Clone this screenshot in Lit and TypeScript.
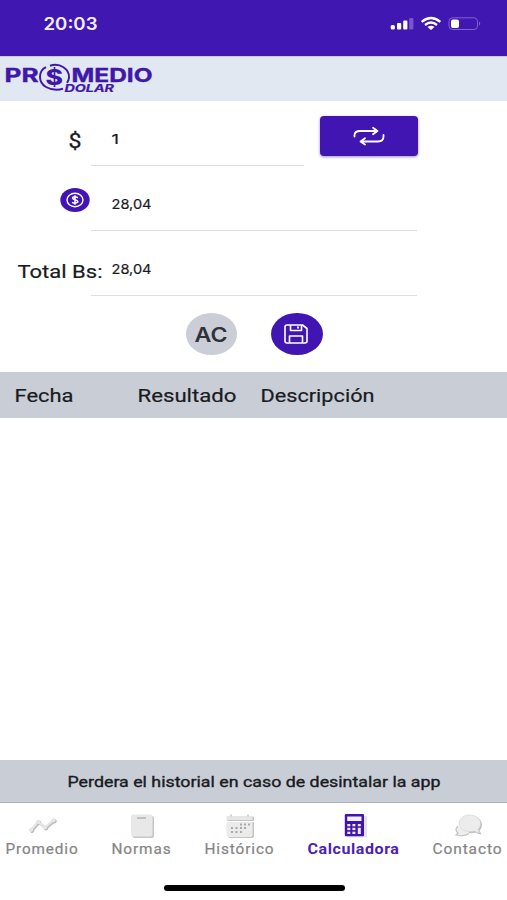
import { LitElement, html, svg, css } from "lit";
import { customElement } from "lit/decorators.js";

// Wide-set text: the glyphs are stretched to fill the given width.
const wide = (text: string, width: number, height: number, cls: string) => html`
  <svg class="wide ${cls}" width=${width} height=${height}>
    <text x="-0.5" y=${height - 0.3} textLength=${width} lengthAdjust="spacingAndGlyphs">${text}</text>
  </svg>`;

const dots = (list: number[][]) => list.map(([x, y]) => svg`<rect x=${x} y=${y} width="2" height="2" fill="#a9a9a9"/>`);

const icons = {
  trend: html`<svg class="ico" width="30" height="24" viewBox="0 0 30 24">
    <g fill="#bdbdbd" stroke="#bdbdbd"><path d="M5 16.800L12 8.800L19 14.300L27.500 7.200" fill="none" stroke-width="2.600"/><circle cx="5" cy="16.800" r="1.800"/><circle cx="12" cy="8.800" r="1.800"/><circle cx="19" cy="14.300" r="1.800"/><circle cx="27.500" cy="7.200" r="1.800"/></g>
    <g fill="#e6e6e6" stroke="#e6e6e6"><path d="M4 15.800L11 7.800L18 13.300L26.500 6.200" fill="none" stroke-width="2.200"/><circle cx="4" cy="15.800" r="1.600"/><circle cx="11" cy="7.800" r="1.600"/><circle cx="18" cy="13.300" r="1.600"/><circle cx="26.500" cy="6.200" r="1.600"/></g></svg>`,
  note: html`<svg class="ico" width="30" height="24" viewBox="0 0 30 24">
    <rect x="5.500" y="2" width="21.500" height="22" rx="2" fill="#c6c6c6"/><rect x="4" y=".5" width="21.500" height="22" rx="2" fill="#e8e8e8"/><path d="M10 4h9" stroke="#ababab" stroke-width="1.300"/></svg>`,
  calendar: html`<svg class="ico" width="30" height="24" viewBox="0 0 30 24">
    <path d="M3 8h26v14q0 2-2 2h-22q-2 0-2-2z" fill="#c4c4c4"/><path d="M1.500 8h26v13q0 2-2 2h-22q-2 0-2-2z" fill="#ebebeb"/>
    <path d="M2.500 3.500q0-1 1-1h24.500q1 0 1 1v3.500h-26.500z" fill="#c4c4c4"/><path d="M1.500 3q0-1 1-1h24q1 0 1 1v3h-26z" fill="#e6e6e6"/><path d="M6 .5v2M23 .5v2" stroke="#d0d0d0" stroke-width="2"/>
    ${dots([[15,9.5],[19,9.5],[23,9.5],[6,13],[10.5,13],[15,13],[19,13],[6,17],[10.5,17],[15,17]])}</svg>`,
  calc: html`<svg class="ico" width="30" height="24" viewBox="0 0 30 24">
    <rect x="8" y="2" width="20" height="21.500" fill="#e4e1ec"/><rect x="5.800" y="0" width="19.200" height="22.300" rx="1" fill="#4015ad"/><rect x="8.200" y="2.500" width="14.300" height="4.500" fill="#f2effa"/>
    <g fill="#ece8f7"><rect x="8.300" y="10" width="3" height="2.300"/><rect x="13.400" y="10" width="3" height="2.300"/><rect x="18.800" y="10" width="3" height="2.300"/><rect x="8.300" y="13.800" width="3" height="2.300"/><rect x="13.400" y="13.800" width="3" height="2.300"/><rect x="8.300" y="17.700" width="3" height="2.300"/><rect x="13.400" y="17.700" width="3" height="2.300"/><rect x="18.800" y="13.800" width="3" height="6.200"/></g></svg>`,
  chat: html`<svg class="ico" width="30" height="24" viewBox="0 0 30 24">
    <path d="M5 12Q1 16 5 19L3 21Q11 23 16 19.500" fill="#eee" stroke="#c4c4c4" stroke-width="1.200"/>
    <path d="M18 2.500C25 2.500 29 6 29 11q0 3-2.500 5.500l2 4q-4-.5-6-2-3 1-7 .5" fill="#bfbfbf"/>
    <path d="M16.500 1C23 1 27.500 5 27.500 9.500q0 3.500-2.500 6l1.500 3.500q-3-.5-5-2-9 2.500-14-3.500C3.500 7 9 1 16.500 1z" fill="#ececec" stroke="#d4d4d4" stroke-width=".7"/></svg>`,
};

const tabs = [
  { name: "Promedio", width: 73, gap: 5.5, icon: icons.trend },
  { name: "Normas", width: 60, gap: 33, icon: icons.note },
  { name: "Histórico", width: 70, gap: 33, icon: icons.calendar },
  { name: "Calculadora", width: 92, gap: 33, icon: icons.calc },
  { name: "Contacto", width: 70, gap: 33, icon: icons.chat },
];

@customElement("app-root")
export class AppRoot extends LitElement {
  static styles = css`
    :host { display: flex; flex-direction: column; height: 900px; background: #fff; font-family: Roboto, sans-serif; overflow: hidden; }
    * { box-sizing: border-box; }
    svg { display: block; flex: none; overflow: visible; }
    .wide { fill: #191b1f; font-family: Roboto, sans-serif; }
    .clock { fill: #f4efff; font: 600 17px Inter, sans-serif; }
    .num { font: 400 13.3px Inter, sans-serif; stroke: #191b1f; stroke-width: .2px; }
    .lbl { font-size: 18px; stroke: #191b1f; stroke-width: .2px; }
    .dollar { font-size: 20px; stroke: #191b1f; stroke-width: .3px; }
    .ac-text { font: 600 20px Inter, sans-serif; fill: #30323a; }
    .notice-text { font-size: 14.5px; stroke: #191b1f; stroke-width: .35px; }
    .tab-text { font-size: 13.8px; fill: #858585; letter-spacing: .8px; stroke: #858585; stroke-width: .2px; }
    .active { fill: #4b22b4; font-weight: 700; letter-spacing: .5px; stroke: none; }
    .status { height: 56px; flex: none; background: #4017b0; display: flex; align-items: flex-start; padding: 17px 25px 0 44px; }
    .signals { margin: -1px 0 0 auto; }
    .brand { height: 44.5px; flex: none; background: #e1e8f2; border-top: 1px solid #c5cbdd; padding: 5px 0 0 5px; }
    .logo-main { font: 700 19px Inter, sans-serif; stroke: #3f17ab; stroke-width: .4px; }
    .logo-sub { font: italic 700 10.6px Inter, sans-serif; stroke: #3f17ab; stroke-width: .2px; }
    .logo-coin { font: 800 22px Inter, sans-serif; }
    .form { height: 271.5px; flex: none; display: flex; flex-direction: column; }
    .row { display: grid; grid-template-columns: 91px 326px; height: 65.3px; }
    .lead { display: flex; align-items: flex-start; justify-content: flex-end; }
    .lead-dollar { padding: 32px 9.5px 0 0; }
    .lead-rate { padding: 22px 1px 0 0; }
    .lead-total { padding: 34px 0 0 18px; justify-content: flex-start; }
    .first { display: grid; grid-template-columns: 213px 98px; column-gap: 16px; }
    .field { border-bottom: 1.5px solid #dededf; padding-left: 21px; display: flex; align-items: flex-end; padding-bottom: 21px; }
    .swap { width: 98px; height: 40px; margin-top: 15.5px; border-radius: 4px; background: #4015b2; box-shadow: 0 1px 3px #4015b280; display: flex; align-items: center; justify-content: center; }
    .actions { display: flex; gap: 34px; padding: 16.5px 0 0 185.5px; }
    .round { width: 51.5px; height: 42px; border-radius: 50%; display: flex; align-items: center; justify-content: center; }
    .clear { background: #cbced7; padding-top: 1px; }
    .save { background: #4015b2; padding-right: 1px; }
    .table-head { height: 46px; flex: none; background: #c9ced6; display: grid; grid-template-columns: 123px 123.5px 1fr; padding: 17px 0 0 14.5px; }
    .table-body { flex: 1; }
    .notice { height: 43px; flex: none; background: #c9ced6; border-bottom: 1px solid #aeb1b7; display: flex; padding: 16.8px 0 0 68px; }
    .tabs { height: 97px; flex: none; display: flex; flex-direction: column; align-items: center; }
    .tab-row { display: flex; align-self: stretch; height: 82px; padding-top: 10.5px; }
    .tab { display: flex; flex-direction: column; align-items: center; gap: 6.5px; }
    .home { width: 181px; height: 5.5px; margin-left: 1px; border-radius: 3px; background: #000; }
  `;

  render() {
    return html`
      <div class="status">
        ${wide("20:03", 54, 13, "clock")}
        <svg class="signals" width="92" height="16" viewBox="0 0 92 16">
          <g fill="#fff"><rect x=".7" y="9" width="4.200" height="4.500" rx="1.500"/><rect x="7" y="7" width="4.200" height="6.500" rx="1"/><rect x="13.200" y="4.500" width="4.200" height="9" rx="1"/></g>
          <rect x="19.200" y="2" width="4.200" height="11.500" rx="1" fill="#7956cc"/>
          <g fill="none" stroke="#fff" stroke-width="2.300"><path d="M31.700 5.800Q41 -1.800 50.300 5.800"/><path d="M35 9Q41 4 47 9"/></g><path d="M37.500 11Q41 8.400 44.500 11L41 14z" fill="#fff"/>
          <rect x="59" y="1.800" width="28.500" height="11.700" rx="3.500" fill="none" stroke="#8060cb"/><rect x="61" y="3.400" width="8" height="8.500" rx="2" fill="#fff"/><path d="M89 5.500q2.500 2 0 4.300z" fill="#8060cb"/>
        </svg>
      </div>
      <div class="brand">
        <svg width="150" height="34" viewBox="5 62 150 34" fill="#3f17ab">
          <text class="logo-main" x="4.500" y="82" textLength="34" lengthAdjust="spacingAndGlyphs">PR</text>
          <text class="logo-main" x="71.500" y="82" textLength="81" lengthAdjust="spacingAndGlyphs">MEDIO</text>
          <text class="logo-coin" x="45.500" y="85.200" textLength="17.500" lengthAdjust="spacingAndGlyphs">$</text>
          <g fill="none" stroke="#3f17ab" stroke-width="2"><path d="M46 67.200C38 71 38 82.500 46 87Q54 91.500 63 88.800"/><path d="M50 65.800C60 62.500 69.500 69 69 77.500Q68.700 80.500 67 82.800"/></g>
          <text class="logo-sub" x="64.500" y="91.800" textLength="49.500" lengthAdjust="spacingAndGlyphs">DOLAR</text>
        </svg>
      </div>
      <div class="form">
        <div class="row">
          <div class="lead lead-dollar">${wide("$", 13, 15, "dollar")}</div>
          <div class="first">
            <div class="field">${wide("1", 7.5, 10, "num")}</div>
            <div class="swap">
              <svg width="32" height="20" viewBox="0 0 32 20" fill="none" stroke="#fff" stroke-width="1.800" stroke-linecap="round" stroke-linejoin="round"><path d="M1.500 10.500V9.500Q1.500 5 7 5H24M20 1.800L24.500 5L20 8.200"/><path d="M30.500 9V10.500Q30.500 15.500 25 15.500H8M12 12.300L7.500 15.500L12 18.500"/></svg>
            </div>
          </div>
        </div>
        <div class="row">
          <div class="lead lead-rate">
            <svg width="30" height="25" viewBox="0 0 30 25"><ellipse cx="15" cy="12" rx="14.700" ry="12" fill="#4015b2"/><ellipse cx="15" cy="12" rx="8" ry="6.700" fill="none" stroke="#fff" stroke-width="1.400"/><path d="M18 9.800Q15 7.800 12.700 9.300C11.500 12 18.500 11.300 17.800 14Q15.500 16 12 14.300M15 7.300v9.400" fill="none" stroke="#fff" stroke-width="1.500"/></svg>
          </div>
          <div class="field">${wide("28,04", 40, 10, "num")}</div>
        </div>
        <div class="row">
          <div class="lead lead-total">${wide("Total Bs:", 85, 13, "lbl")}</div>
          <div class="field">${wide("28,04", 40, 10, "num")}</div>
        </div>
        <div class="actions">
          <div class="round clear">${wide("AC", 33, 15, "ac-text")}</div>
          <div class="round save">
            <svg width="24" height="20" viewBox="0 0 24 20" fill="none" stroke="#fff" stroke-width="1.600" stroke-linejoin="round"><path d="M3 1H18.500L23 4.500V17Q23 19 21 19H3Q1 19 1 17V3Q1 1 3 1z"/><path d="M6.500 1V6.500H17.500V1M5.500 19V12H18.500V19"/><path d="M14 2.500v2" stroke-width="2"/></svg>
          </div>
        </div>
      </div>
      <div class="table-head">
        ${wide("Fecha", 59, 13, "lbl")}${wide("Resultado", 99, 13, "lbl")}${wide("Descripción", 114, 13, "lbl")}
      </div>
      <div class="table-body"></div>
      <div class="notice">${wide("Perdera el historial en caso de desintalar la app", 373, 10.5, "notice-text")}</div>
      <div class="tabs">
        <div class="tab-row">
          ${tabs.map((t) => html`<div class="tab" style="margin-left:${t.gap}px">${t.icon}${wide(t.name, t.width, 10, t.name === "Calculadora" ? "tab-text active" : "tab-text")}</div>`)}
        </div>
        <div class="home"></div>
      </div>`;
  }
}
